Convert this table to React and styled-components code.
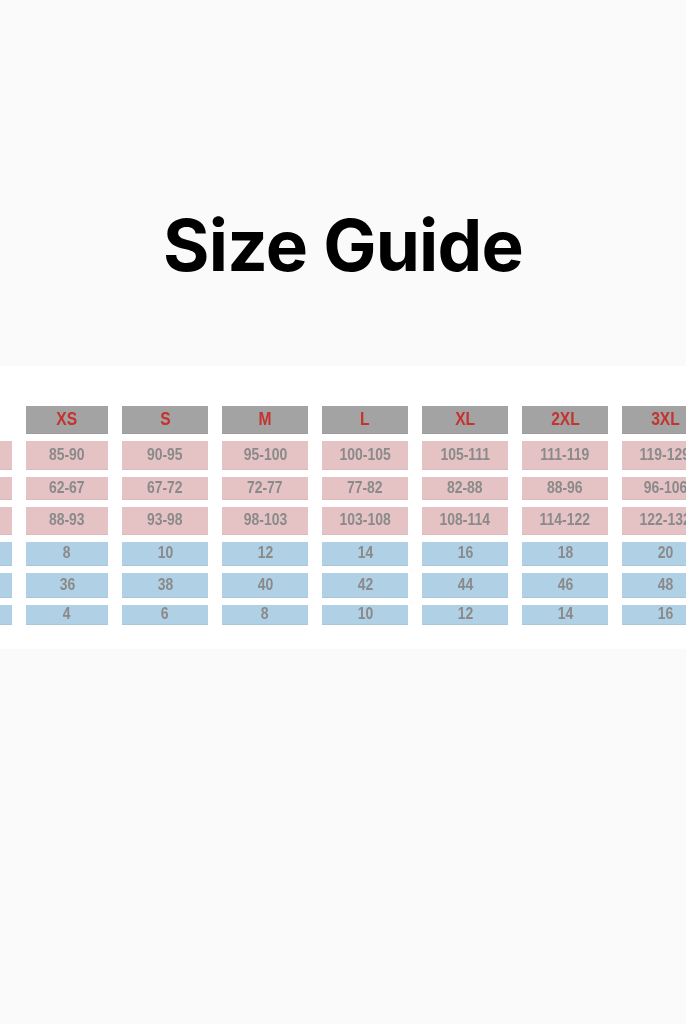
import React from "react";
import styled, { createGlobalStyle } from "styled-components";

const Global = createGlobalStyle`
  html, body { margin: 0; padding: 0; background: #fafafa; }
  body { width: 686px; height: 1024px; overflow: hidden; }
`;

const Page = styled.div`
  width: 686px;
  height: 1024px;
  background: #fafafa;
  display: flex;
  flex-direction: column;
  align-items: center;
  overflow: hidden;
`;

const Title = styled.h1`
  margin: 206px 0 0;
  font-family: Inter, "Liberation Sans", sans-serif;
  font-weight: 700;
  font-size: 71px;
  line-height: 78px;
  color: #000;
  letter-spacing: -0.8px;
`;

const Band = styled.div`
  margin-top: 82px;
  width: 686px;
  height: 283px;
  background: #ffffff;
  overflow: hidden;
  display: flex;
  flex-direction: column;
  padding-top: 40px;
  box-sizing: border-box;
`;

const Table = styled.div`
  display: flex;
  flex-direction: column;
  gap: 7px;
  margin-left: -74px;
`;

const Row = styled.div`
  display: grid;
  grid-template-columns: 86px 82px 86px 86px 86px 86px 86px 86px;
  column-gap: 14px;
  height: ${(p) => p.$h}px;
`;

const palette = {
  head: "#a3a3a3",
  pink: "#e5c3c5",
  blue: "#b0d0e5",
};

const Cell = styled.div`
  background: ${(p) => palette[p.$kind]};
  display: flex;
  align-items: center;
  justify-content: center;
  border-bottom: 1px solid rgba(0,0,0,0.04);
  box-sizing: border-box;
`;

const Label = styled.span`
  display: inline-block;
  font-family: "Liberation Sans", Arial, sans-serif;
  font-weight: 700;
  font-size: ${(p) => (p.$head ? 19 : 17)}px;
  line-height: 1;
  margin-top: -2px;
  color: ${(p) => (p.$head ? "#c4332f" : "#8a8a8a")};
  transform: scaleX(0.82);
  white-space: nowrap;
  filter: blur(0.3px);
`;

const rows = [
  { kind: "head", h: 28, vals: ["", "XS", "S", "M", "L", "XL", "2XL", "3XL"] },
  { kind: "pink", h: 29, vals: ["", "85-90", "90-95", "95-100", "100-105", "105-111", "111-119", "119-129"] },
  { kind: "pink", h: 23, vals: ["", "62-67", "67-72", "72-77", "77-82", "82-88", "88-96", "96-106"] },
  { kind: "pink", h: 28, vals: ["", "88-93", "93-98", "98-103", "103-108", "108-114", "114-122", "122-132"] },
  { kind: "blue", h: 24, vals: ["", "8", "10", "12", "14", "16", "18", "20"] },
  { kind: "blue", h: 25, vals: ["", "36", "38", "40", "42", "44", "46", "48"] },
  { kind: "blue", h: 20, vals: ["", "4", "6", "8", "10", "12", "14", "16"] },
];

export default function App() {
  return (
    <Page>
      <Global />
      <Title>Size Guide</Title>
      <Band>
        <Table>
          {rows.map((r, i) => (
            <Row key={i} $h={r.h}>
              {r.vals.map((v, j) =>
                r.kind === "head" && j === 0 ? (
                  <div key={j} />
                ) : (
                  <Cell key={j} $kind={r.kind}>
                    <Label $head={r.kind === "head"}>{v}</Label>
                  </Cell>
                )
              )}
            </Row>
          ))}
        </Table>
      </Band>
    </Page>
  );
}
